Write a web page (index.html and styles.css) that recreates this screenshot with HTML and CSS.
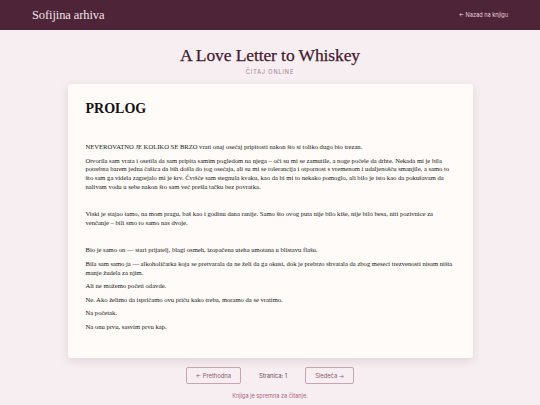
FILE: index.html
```html
<!DOCTYPE html>
<html lang="sr">
<head>
<meta charset="utf-8">
<title>Sofijina arhiva</title>
<link rel="stylesheet" href="styles.css">
</head>
<body>
<header class="topbar">
  <div class="brand">Sofijina arhiva</div>
  <a class="back" href="#">← Nazad na knjigu</a>
</header>
<main class="page">
  <div class="heading">
    <h1 class="title">A Love Letter to Whiskey</h1>
    <div class="subtitle">ČITAJ ONLINE</div>
  </div>
  <article class="card">
    <h2 class="chapter">PROLOG</h2>
    <div class="text">
      <p>NEVEROVATNO JE KOLIKO SE BRZO vrati onaj osećaj pripitosti nakon što si toliko dugo bio trezan.</p>
      <p>Otvorila sam vrata i osetila da sam pripita samim pogledom na njega – oči su mi se zamutile, a noge počele da drhte. Nekada mi je bila potrebna barem jedna čašica da bih došla do tog osećaja, ali su mi se tolerancija i otpornost s vremenom i udaljenošću smanjile, a samo to što sam ga videla zagrejalo mi je krv. Čvršće sam stegnula kvaku, kao da bi mi to nekako pomoglo, ali bilo je isto kao da pokušavam da nalivam vodu u sebe nakon što sam već prešla tačku bez povratka.</p>
      <p class="blank">&nbsp;</p>
      <p>Viski je stajao tamo, na mom pragu, baš kao i godinu dana ranije. Samo što ovog puta nije bilo kiše, nije bilo besa, niti pozivnice za venčanje – bili smo to samo nas dvoje.</p>
      <p class="blank">&nbsp;</p>
      <p>Bio je samo on — stari prijatelj, blagi osmeh, izopačena uteha umotana u blistavu flašu.</p>
      <p>Bila sam samo ja — alkoholičarka koja se pretvarala da ne želi da ga okusi, dok je prebrzo shvatala da zbog meseci trezvenosti nisam ništa manje žudela za njim.</p>
      <p>Ali ne možemo početi odavde.</p>
      <p>Ne. Ako želimo da ispričamo ovu priču kako treba, moramo da se vratimo.</p>
      <p>Na početak.</p>
      <p>Na onu prvu, sasvim prvu kap.</p>
    </div>
  </article>
  <nav class="pager">
    <button class="pbtn prev">← Prethodna</button>
    <span class="pnum">Stranica: 1</span>
    <button class="pbtn next">Sledeća →</button>
  </nav>
  <div class="status">Knjiga je spremna za čitanje.</div>
</main>
</body>
</html>
```

FILE: styles.css
```css
html, body {
  margin: 0;
  padding: 0;
}
body {
  background: #f6eef1;
  font-family: "Liberation Serif", "Times New Roman", serif;
  width: 540px;
  height: 405px;
  overflow: hidden;
}
.topbar {
  height: 30px;
  background: #4e2438;
  display: flex;
  align-items: center;
  justify-content: space-between;
  padding: 0 32px;
  box-sizing: border-box;
}
.brand {
  font-family: "Liberation Serif", serif;
  font-size: 12.5px;
  color: #f4e2ea;
  letter-spacing: -0.1px;
}
.back {
  font-family: "Inter", "Open Sans", sans-serif;
  font-size: 5.6px;
  color: #e9d3dd;
  text-decoration: none;
}
.page {
  display: flex;
  flex-direction: column;
  align-items: center;
}
.heading {
  padding-top: 14px;
  text-align: center;
}
.title {
  margin: 0;
  font-family: "Liberation Serif", serif;
  font-weight: normal;
  font-size: 17.5px;
  line-height: 22px;
  color: #44192e;
  letter-spacing: -0.1px;
  -webkit-text-stroke: 0.25px #44192e;
}
.subtitle {
  margin-top: 3px;
  font-family: "Inter", "Open Sans", sans-serif;
  font-size: 5.5px;
  letter-spacing: 0.9px;
  color: #9d7a88;
}
.card {
  margin-top: 9px;
  width: 405px;
  height: 274px;
  box-sizing: border-box;
  background: #fffbf8;
  border-radius: 3px;
  box-shadow: 0 3px 10px rgba(80, 40, 60, 0.12);
  padding: 16px 17px 0 18px;
  color: #151515;
}
.chapter {
  margin: 0;
  font-family: "Liberation Serif", serif;
  font-weight: bold;
  font-size: 14px;
  line-height: 17px;
  color: #111;
}
.text {
  margin-top: 26px;
  font-size: 6.6px;
  line-height: 8.8px;
}
.text p {
  margin: 0 0 4.8px 0;
}
.pager {
  margin-top: 9px;
  display: flex;
  align-items: center;
  gap: 18px;
}
.pbtn {
  height: 17px;
  padding: 0 9px;
  background: transparent;
  border: 1px solid #c9a3b3;
  border-radius: 2px;
  font-family: "Inter", "Open Sans", sans-serif;
  font-size: 5.8px;
  color: #8a5a6e;
}
.pnum {
  font-family: "Inter", "Open Sans", sans-serif;
  font-size: 5.8px;
  color: #6a4a58;
}
.status {
  margin-top: 9px;
  font-family: "Inter", "Open Sans", sans-serif;
  font-size: 5.6px;
  color: #b0607f;
}
```
